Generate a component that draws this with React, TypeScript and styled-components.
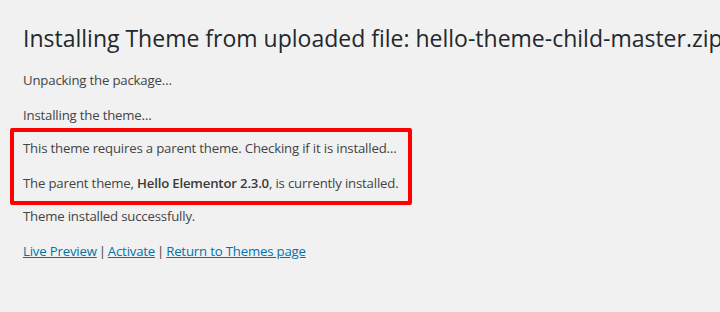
import React from "react";
import styled, { createGlobalStyle } from "styled-components";

const Global = createGlobalStyle`
  html, body { margin: 0; padding: 0; background: #f1f1f1; }
  body { font-family: "Open Sans", "Noto Sans", sans-serif; overflow: hidden; }
`;

const Page = styled.div`
  width: 720px;
  height: 312px;
  box-sizing: border-box;
  padding: 20px 0 0 23px;
  background: #f1f1f1;
  overflow: hidden;
`;

const Title = styled.h1`
  margin: 0 0 14px;
  font-size: 23px;
  line-height: 36px;
  font-weight: 400;
  color: #23282d;
  white-space: nowrap;
`;

const Line = styled.p`
  margin: 14px 0;
  font-size: 13.2px;
  letter-spacing: -0.18px;
  line-height: 21px;
  color: #444;
  white-space: nowrap;
`;

const Strong = styled.strong`
  font-weight: 600;
  color: #3a3a3a;
`;

const Highlight = styled.div`
  width: 402px;
  box-sizing: border-box;
  margin: -12.5px 0 -12.5px -13px;
  padding: 6.5px 9px;
  border: 4px solid #f00;
  border-radius: 2px;
  & > p:first-child { margin-top: 0; }
  & > p:last-child { margin-bottom: 0; }
`;

const Link = styled.a`
  color: #0073aa;
  text-decoration: underline;
`;

const Sep = styled.span`
  color: #444;
  margin: 0 2px;
`;

export default function App() {
  return (
    <>
      <Global />
      <Page>
        <Title>Installing Theme from uploaded file: hello-theme-child-master.zip</Title>
        <Line>Unpacking the package…</Line>
        <Line>Installing the theme…</Line>
        <Highlight>
          <Line>This theme requires a parent theme. Checking if it is installed…</Line>
          <Line>
            The parent theme, <Strong>Hello Elementor 2.3.0</Strong>, is currently installed.
          </Line>
        </Highlight>
        <Line>Theme installed successfully.</Line>
        <Line>
          <Link href="#">Live Preview</Link>
          <Sep>|</Sep>
          <Link href="#">Activate</Link>
          <Sep>|</Sep>
          <Link href="#">Return to Themes page</Link>
        </Line>
      </Page>
    </>
  );
}
